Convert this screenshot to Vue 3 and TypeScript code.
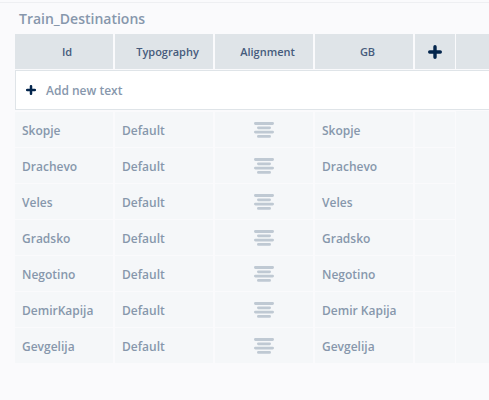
<script setup lang="ts">
interface Entry {
  id: string
  typography: string
  gb: string
}

const entries: Entry[] = [
  { id: 'Skopje', typography: 'Default', gb: 'Skopje' },
  { id: 'Drachevo', typography: 'Default', gb: 'Drachevo' },
  { id: 'Veles', typography: 'Default', gb: 'Veles' },
  { id: 'Gradsko', typography: 'Default', gb: 'Gradsko' },
  { id: 'Negotino', typography: 'Default', gb: 'Negotino' },
  { id: 'DemirKapija', typography: 'Default', gb: 'Demir Kapija' },
  { id: 'Gevgelija', typography: 'Default', gb: 'Gevgelija' },
]
</script>

<template>
  <main class="panel">
    <h1 class="title">Train_Destinations</h1>
    <div class="header columns">
      <div class="head id">Id</div>
      <div class="head typography">Typography</div>
      <div class="head alignment">Alignment</div>
      <div class="head gb">GB</div>
      <div class="head plus">
        <svg width="14" height="14" viewBox="0 0 14 14">
          <path d="M7 1.7V12.3M1.7 7H12.3" />
        </svg>
      </div>
      <div class="head"></div>
    </div>
    <div class="add-row">
      <svg width="10" height="10" viewBox="0 0 10 10">
        <path d="M5 1.2V8.8M1.2 5H8.8" />
      </svg>
      <span>Add new text</span>
    </div>
    <div class="body">
      <div class="rows">
        <div v-for="entry in entries" :key="entry.id" class="row">
          <div class="cell">{{ entry.id }}</div>
          <div class="cell">{{ entry.typography }}</div>
          <div class="cell icon">
            <svg width="20" height="16" viewBox="0 0 20 16">
              <path d="M1.4 1.5H18.6M4.4 5.8H15.6M1.4 10.1H18.6M4.4 14.4H15.6" />
            </svg>
          </div>
          <div class="cell">{{ entry.gb }}</div>
          <div class="cell"></div>
        </div>
      </div>
      <div class="filler"></div>
    </div>
  </main>
</template>

<style>
body {
  background: #fafafc;
}
</style>

<style scoped>
.panel {
  box-sizing: border-box;
  height: 400px;
  padding: 2px 0 0 15px;
  overflow: hidden;
  background: linear-gradient(#eeeff2, #eeeff2) 0 2px / 100% 1px no-repeat #fafafc;
  font-family: 'Open Sans', sans-serif;
  font-weight: 600;
  color: #8797ac;
}
.title {
  margin: 0;
  height: 32px;
  padding-left: 4px;
  font-size: 14px;
  line-height: 34px;
  font-weight: 600;
}
.columns {
  display: grid;
  grid-template-columns: 100px 100px 100px 100px 41px 1fr;
  height: 35px;
}
.head {
  display: flex;
  align-items: center;
  justify-content: center;
  margin-right: 2px;
  background: #dfe4e8;
  color: #465b7c;
  font-size: 11px;
}
.head.id {
  padding-left: 6px;
}
.head.typography,
.head.alignment,
.head.gb {
  padding-left: 7px;
}
.head.plus {
  margin-right: 1px;
}
.head:last-child {
  margin-right: 0;
}
.head svg,
.add-row svg {
  fill: none;
  stroke: #03254c;
  stroke-linecap: round;
}
.head svg {
  stroke-width: 3.4;
}
.add-row {
  box-sizing: border-box;
  display: flex;
  align-items: center;
  gap: 10px;
  height: 40px;
  margin-top: 1px;
  padding-left: 10px;
  border: 1px solid #dfe4e8;
  border-right: 0;
  background: #fff;
  font-size: 12px;
}
.add-row svg {
  stroke-width: 2.5;
}
.body {
  display: grid;
  grid-template-columns: 440px 1fr;
  column-gap: 1px;
  margin-top: 1px;
}
.rows {
  display: grid;
  row-gap: 1px;
  padding-top: 1px;
}
.row {
  display: grid;
  grid-template-columns: 98px 98px 98px 98px 40px;
  column-gap: 2px;
  height: 35px;
}
.cell {
  display: flex;
  align-items: center;
  padding: 2px 7px 0;
  background: #f5f7f9;
  font-size: 12px;
  line-height: 17px;
  white-space: nowrap;
}
.cell.icon {
  justify-content: center;
  padding: 1px 0 0;
}
.cell.icon svg {
  fill: none;
  stroke: #bfc9d3;
  stroke-width: 2.8;
  stroke-linecap: round;
}
.filler {
  background: #f5f7f9;
}
</style>
